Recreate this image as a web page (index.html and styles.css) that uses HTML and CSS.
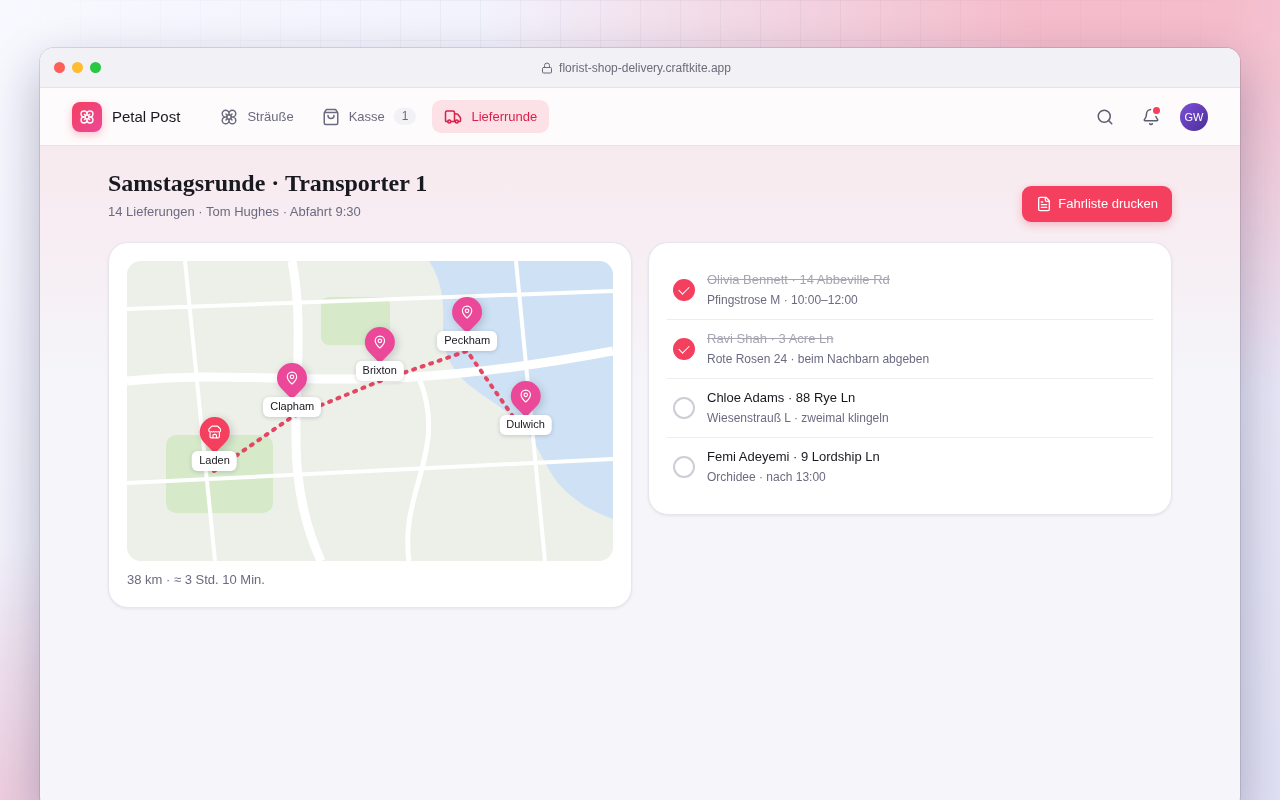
FILE: index.html
```html
<!DOCTYPE html>
<html lang="de">
<head>
<meta charset="utf-8">
<meta name="viewport" content="width=device-width, initial-scale=1">
<title>Petal Post – Lieferrunde</title>
<link rel="stylesheet" href="styles.css">
</head>
<body>
<svg class="sprite" aria-hidden="true">
  <symbol id="flower" viewBox="0 0 24 24">
    <circle cx="12" cy="12" r="3"/>
    <path d="M12 16.5A4.5 4.5 0 1 1 7.500 12 4.500 4.500 0 1 1 12 7.500a4.500 4.500 0 1 1 4.500 4.500 4.500 4.500 0 1 1-4.500 4.500M12 7.500V9M7.500 12H9M16.500 12H15M12 16.500V15M8 8l1.880 1.880M14.120 9.880 16 8M8 16l1.880-1.880M14.120 14.120 16 16"/>
  </symbol>
  <symbol id="bag" viewBox="0 0 24 24"><path d="M6 2 3.400 5.467A2 2 0 0 0 3 6.667V20a2 2 0 0 0 2 2h14a2 2 0 0 0 2-2V6.667a2 2 0 0 0-.400-1.200L18 2ZM3.200 6h17.600M16 10a4 4 0 0 1-8 0"/></symbol>
  <symbol id="truck" viewBox="0 0 24 24"><path d="M14 18V6a2 2 0 0 0-2-2H4a2 2 0 0 0-2 2v11a1 1 0 0 0 1 1h2M15 18H9M19 18h2a1 1 0 0 0 1-1v-3.650a1 1 0 0 0-.220-.624l-3.480-4.350A1 1 0 0 0 17.520 8H14"/><circle cx="17" cy="18" r="2"/><circle cx="7" cy="18" r="2"/></symbol>
  <symbol id="pin" viewBox="0 0 24 24"><path d="M20 10c0 4.993-5.539 10.193-7.399 11.799a1 1 0 0 1-1.202 0C9.539 20.193 4 14.993 4 10a8 8 0 0 1 16 0"/><circle cx="12" cy="10" r="3"/></symbol>
  <symbol id="store" viewBox="0 0 24 24"><path d="m2 7 4.410-4.410A2 2 0 0 1 7.830 2h8.340a2 2 0 0 1 1.420.590L22 7M4 12v8a2 2 0 0 0 2 2h12a2 2 0 0 0 2-2v-8M15 22v-4a2 2 0 0 0-2-2h-2a2 2 0 0 0-2 2v4M2 7v3a2 2 0 0 0 2 2 2.700 2.700 0 0 0 1.590-.630.700.700 0 0 1 .820 0A2.700 2.700 0 0 0 8 12a2.700 2.700 0 0 0 1.590-.630.700.700 0 0 1 .820 0A2.700 2.700 0 0 0 12 12a2.700 2.700 0 0 0 1.590-.630.700.700 0 0 1 .820 0A2.700 2.700 0 0 0 16 12a2.700 2.700 0 0 0 1.590-.630.700.700 0 0 1 .820 0A2.700 2.700 0 0 0 20 12a2 2 0 0 0 2-2V7"/></symbol>
</svg>
<div class="backdrop" aria-hidden="true"></div>
<div class="window">
  <div class="titlebar">
    <div class="lights"><span class="light red"></span><span class="light amber"></span><span class="light green"></span></div>
    <div class="address">
      <svg class="icon icon-xs" viewBox="0 0 24 24" aria-hidden="true"><rect x="3" y="11" width="18" height="11" rx="2"/><path d="M7 11V7a5 5 0 0 1 10 0v4"/></svg>
      <span>florist-shop-delivery.craftkite.app</span>
    </div>
  </div>
  <header class="topbar">
    <a class="brand" href="#"><span class="logo"><svg class="icon icon-sm" aria-hidden="true"><use href="#flower"/></svg></span>Petal Post</a>
    <nav class="nav">
      <a href="#"><svg class="icon" aria-hidden="true"><use href="#flower"/></svg>Sträuße</a>
      <a href="#"><svg class="icon" aria-hidden="true"><use href="#bag"/></svg>Kasse<span class="count">1</span></a>
      <a class="active" href="#" aria-current="page"><svg class="icon" aria-hidden="true"><use href="#truck"/></svg>Lieferrunde</a>
    </nav>
    <div class="tools">
      <button class="tool" type="button" aria-label="Suchen"><svg class="icon" viewBox="0 0 24 24"><circle cx="11" cy="11" r="8"/><path d="m21 21-4.300-4.300"/></svg></button>
      <button class="tool" type="button" aria-label="Mitteilungen"><svg class="icon" viewBox="0 0 24 24"><path d="M10.268 21a2 2 0 0 0 3.464 0M3.262 15.326A1 1 0 0 0 4 17h16a1 1 0 0 0 .740-1.673C19.410 13.956 18 12.499 18 8A6 6 0 0 0 6 8c0 4.499-1.411 5.956-2.738 7.326"/></svg><span class="dot"></span></button>
      <button class="avatar" type="button">GW</button>
    </div>
  </header>
  <main class="content">
    <div class="head">
      <div>
        <h1>Samstagsrunde · Transporter 1</h1>
        <p class="sub">14 Lieferungen · Tom Hughes · Abfahrt 9:30</p>
      </div>
      <button class="print" type="button"><svg class="icon icon-sm" viewBox="0 0 24 24" aria-hidden="true"><path d="M15 2H6a2 2 0 0 0-2 2v16a2 2 0 0 0 2 2h12a2 2 0 0 0 2-2V7ZM14 2v4a2 2 0 0 0 2 2h4M10 9H8M16 13H8M16 17H8"/></svg>Fahrliste drucken</button>
    </div>
    <div class="columns">
      <section class="card">
        <div class="map">
          <svg class="chart" viewBox="0 0 486 300" preserveAspectRatio="none" aria-hidden="true">
            <path class="water" d="M302 0C316 22 317 42 316 66C316 94 326 112 346 127C364 141 391 154 408 183C420 204 425 219 443 234C457 246 470 252 486 258V0Z"/>
            <rect class="park" x="39" y="174" width="107" height="78" rx="10"/>
            <rect class="park" x="194" y="36" width="69" height="48" rx="8"/>
            <g class="roads">
              <path class="wide" d="M0 120C146 105 220 140 486 90"/>
              <path class="wide" d="M165 0C185 105 146 195 194 300"/>
              <path class="mid" d="M292 117C322 190 272 230 282 300"/>
              <path d="M0 48 486 30M0 222 486 198M58 0 88 300M389 0 418 300"/>
            </g>
            <path class="route" d="M87 210 165 156 253 120 340 90 399 174"/>
          </svg>
          <div class="stop shop" style="left:18%;top:70%"><span class="drop"><svg class="icon" aria-hidden="true"><use href="#store"/></svg></span><span class="tag">Laden</span></div>
          <div class="stop" style="left:34%;top:52%"><span class="drop"><svg class="icon" aria-hidden="true"><use href="#pin"/></svg></span><span class="tag">Clapham</span></div>
          <div class="stop" style="left:52%;top:40%"><span class="drop"><svg class="icon" aria-hidden="true"><use href="#pin"/></svg></span><span class="tag">Brixton</span></div>
          <div class="stop" style="left:70%;top:30%"><span class="drop"><svg class="icon" aria-hidden="true"><use href="#pin"/></svg></span><span class="tag">Peckham</span></div>
          <div class="stop" style="left:82%;top:58%"><span class="drop"><svg class="icon" aria-hidden="true"><use href="#pin"/></svg></span><span class="tag">Dulwich</span></div>
        </div>
        <p class="distance">38 km · ≈ 3 Std. 10 Min.</p>
      </section>
      <section class="card">
        <ul class="list">
          <li><label><input type="checkbox" checked><span class="entry"><span class="who">Olivia Bennett · 14 Abbeville Rd</span><span class="what">Pfingstrose M · 10:00–12:00</span></span></label></li>
          <li><label><input type="checkbox" checked><span class="entry"><span class="who">Ravi Shah · 3 Acre Ln</span><span class="what">Rote Rosen 24 · beim Nachbarn abgeben</span></span></label></li>
          <li><label><input type="checkbox"><span class="entry"><span class="who">Chloe Adams · 88 Rye Ln</span><span class="what">Wiesenstrauß L · zweimal klingeln</span></span></label></li>
          <li><label><input type="checkbox"><span class="entry"><span class="who">Femi Adeyemi · 9 Lordship Ln</span><span class="what">Orchidee · nach 13:00</span></span></label></li>
        </ul>
      </section>
    </div>
  </main>
</div>
</body>
</html>
```

FILE: styles.css
```css
:root {
  --ink: #18181f;
  --muted: #6b6b80;
  --accent: #f43f5e;
  --pink: #ec4899;
  --line: #e6e6ec;
}
* { box-sizing: border-box; }
html { height: 100%; overflow: hidden; }
body {
  margin: 0;
  height: 100%;
  overflow: hidden;
  padding: 48px 40px 0;
  font: 13px/20px "Liberation Sans", Arial, sans-serif;
  color: var(--ink);
  background:
    radial-gradient(ellipse 50% 50% at 88% 0%, #f5bccb 0%, #f5bccb 15%, rgba(245, 188, 203, 0) 100%),
    radial-gradient(ellipse 50% 32% at 0% 100%, rgba(238, 200, 218, .85) 0%, rgba(238, 200, 218, 0) 100%),
    linear-gradient(135deg, #f8f8ff 0%, #ededfa 50%, #e2e2f5 100%);
}
h1, p, ul { margin: 0; padding: 0; }
a { color: inherit; text-decoration: none; }
button { font: inherit; border: 0; cursor: pointer; }
.sprite { position: absolute; width: 0; height: 0; }
.backdrop {
  position: fixed;
  inset: 0;
  background:
    linear-gradient(90deg, rgba(40, 30, 80, .04) 1px, transparent 1px) 0 0 / 40px 40px,
    linear-gradient(rgba(40, 30, 80, .04) 1px, transparent 1px) 0 0 / 40px 40px;
  -webkit-mask-image: radial-gradient(ellipse 50% 50% at 50% 0, #000 30%, transparent 100%);
  mask-image: radial-gradient(ellipse 50% 50% at 50% 0, #000 30%, transparent 100%);
}
.icon {
  flex: none;
  width: 18px;
  height: 18px;
  fill: none;
  stroke: currentColor;
  stroke-width: 2;
  stroke-linecap: round;
  stroke-linejoin: round;
}
.icon-sm { width: 16px; height: 16px; }
.icon-xs { width: 12px; height: 12px; }

.window {
  position: relative;
  min-height: calc(100% + 10px);
  overflow: hidden;
  border-radius: 14px;
  background: linear-gradient(#f7eaef 98px, #f7edf2 180px, #f5f5fa 330px);
  box-shadow: 0 0 0 1px rgba(24, 24, 50, .12), 0 20px 50px rgba(24, 20, 60, .3);
}
.titlebar {
  display: grid;
  grid-template-columns: 1fr auto 1fr;
  align-items: center;
  height: 40px;
  padding: 0 22px 0 14px;
  background: #f1f1f6;
  border-bottom: 1px solid #e3e3ea;
}
.lights { display: flex; gap: 7px; }
.light { width: 11px; height: 11px; border-radius: 50%; }
.red { background: #ff5f57; }
.amber { background: #febc2e; }
.green { background: #28c840; }
.address {
  display: flex;
  align-items: center;
  gap: 6px;
  font-size: 12px;
  color: #6b6b7a;
}
.topbar {
  display: flex;
  align-items: center;
  height: 58px;
  padding: 0 32px;
  background: #fdfbfc;
  border-bottom: 1px solid #e6e2e9;
}
.brand { display: flex; align-items: center; gap: 10px; font-size: 15px; }
.logo {
  display: grid;
  place-items: center;
  width: 30px;
  height: 30px;
  border-radius: 8px;
  color: #fff;
  background: linear-gradient(135deg, var(--accent), var(--pink));
  box-shadow: 0 3px 8px rgba(244, 63, 94, .3);
}
.nav { display: flex; gap: 4px; margin-left: 28px; }
.nav a {
  display: flex;
  align-items: center;
  gap: 9px;
  height: 33px;
  padding: 0 12px;
  border-radius: 9px;
  color: var(--muted);
}
.nav .active { background: #fce1e6; color: #d91f4a; }
.count {
  padding: 0 8px;
  border-radius: 9px;
  background: #f1f1f6;
  font-size: 12px;
  line-height: 17px;
}
.tools { display: flex; align-items: center; gap: 12px; margin-left: auto; color: #5c5c70; }
.tool {
  position: relative;
  display: grid;
  place-items: center;
  width: 34px;
  height: 34px;
  padding: 0;
  background: none;
  color: inherit;
}
.dot {
  position: absolute;
  top: 5px;
  right: 6px;
  width: 11px;
  height: 11px;
  border: 2px solid #fdfbfc;
  border-radius: 50%;
  background: var(--accent);
}
.avatar {
  width: 28px;
  height: 28px;
  padding: 0;
  border-radius: 50%;
  background: linear-gradient(135deg, #7c4fdc, #4c2f94);
  color: #fff;
  font-size: 11px;
}
.content { max-width: 1128px; margin: 0 auto; padding: 20px 32px; }
.head { display: flex; align-items: flex-end; justify-content: space-between; margin-bottom: 20px; }
h1 { font: bold 24px/34px "Liberation Serif", "Times New Roman", serif; }
.sub { padding-top: 2px; color: var(--muted); }
.print {
  display: flex;
  align-items: center;
  gap: 6px;
  height: 36px;
  padding: 0 14px;
  border-radius: 9px;
  background: var(--accent);
  color: #fff;
  box-shadow: 0 3px 8px rgba(244, 63, 94, .3);
}
.columns { display: grid; grid-template-columns: 1fr 1fr; align-items: start; gap: 16px; }
.card {
  padding: 18px;
  border: 1px solid var(--line);
  border-radius: 20px;
  background: #fff;
  box-shadow: 0 1px 3px rgba(24, 24, 50, .08);
}
.map { position: relative; height: 300px; overflow: hidden; border-radius: 14px; background: #ecf0e8; }
.chart { display: block; width: 100%; height: 100%; }
.water { fill: #cfe2f5; }
.park { fill: #d6eaca; }
.roads { fill: none; stroke: #fff; stroke-width: 4; }
.wide { stroke-width: 9; }
.mid { stroke-width: 5; }
.route { fill: none; stroke: #e44763; stroke-width: 4; stroke-dasharray: 2 7; stroke-linecap: round; stroke-linejoin: round; }
.stop {
  position: absolute;
  display: flex;
  flex-direction: column;
  align-items: center;
  gap: 4px;
  transform: translate(-50%, -100%);
}
.drop {
  display: grid;
  place-items: center;
  width: 30px;
  height: 30px;
  border-radius: 50% 50% 50% 4px;
  transform: rotate(-45deg);
  background: var(--pink);
  color: #fff;
  box-shadow: 0 3px 8px rgba(24, 24, 50, .2);
}
.shop .drop { background: var(--accent); }
.drop .icon { width: 14px; height: 14px; transform: rotate(45deg); }
.tag {
  position: relative;
  height: 20px;
  padding: 0 7px;
  border-radius: 6px;
  background: #fff;
  font-size: 11px;
  line-height: 18px;
  box-shadow: 0 1px 4px rgba(24, 24, 50, .18);
}
.distance { padding-top: 10px; line-height: 18px; color: var(--muted); }
.list { list-style: none; }
.list li + li { border-top: 1px solid #ececf1; }
.list label { display: flex; align-items: center; gap: 12px; padding: 8px 6px; }
.list input {
  appearance: none;
  display: grid;
  place-items: center;
  flex: none;
  width: 22px;
  height: 22px;
  margin: 0;
  border: 2px solid #cdcdd6;
  border-radius: 50%;
}
.list input:checked { border-color: var(--accent); background: var(--accent); }
.list input:checked::before {
  content: "";
  width: 9px;
  height: 5px;
  margin-bottom: 3px;
  border: solid #fff;
  border-width: 0 0 1px 1px;
  transform: rotate(-45deg);
}
.entry { display: grid; }
.who { line-height: 22px; }
.what { padding-bottom: 2px; font-size: 12px; line-height: 18px; color: var(--muted); }
input:checked + .entry .who { color: #a5a5b3; text-decoration: line-through; }
```
